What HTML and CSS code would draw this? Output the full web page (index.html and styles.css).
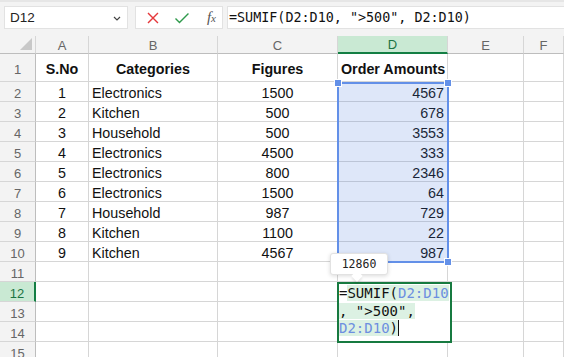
FILE: index.html
```html
<!DOCTYPE html>
<html lang="en">
<head>
    <meta charset="UTF-8">
    <title>SUMIF - Sheet</title>
    <link rel="stylesheet" href="styles.css">
</head>
<body>
    <div class="toolbar">
        <div class="name-box">
            <span>D12</span>
            <svg class="chevron" width="8" height="5" viewBox="0 0 8 5"><path d="M1 1 L4 4 L7 1" fill="none" stroke="#444" stroke-width="1.2"/></svg>
        </div>
        <div class="fx-box">
            <svg width="14" height="14" viewBox="0 0 14 14"><path d="M2 2 L12 12 M12 2 L2 12" stroke="#e5383b" stroke-width="1.4" fill="none"/></svg>
            <svg width="16" height="14" viewBox="0 0 16 14"><path d="M1.5 7.5 L5.5 11.5 L14.5 2.5" stroke="#2f9a4c" stroke-width="1.4" fill="none"/></svg>
            <span class="fx">f<span class="fx-x">x</span></span>
        </div>
        <div class="formula-bar">=SUMIF(D2:D10, "&gt;500", D2:D10)</div>
    </div>

    <div class="sheet">
        <div class="grid">
            <div class="corner"><svg width="12" height="12" viewBox="0 0 12 12"><path d="M12 0 L12 12 L0 12 Z" fill="#c8c8c8"/></svg></div>
            <div class="col-head">A</div>
            <div class="col-head">B</div>
            <div class="col-head">C</div>
            <div class="col-head active">D</div>
            <div class="col-head">E</div>
            <div class="col-head">F</div>

            <div class="row-head tall">1</div>
            <div class="cell tall bold center">S.No</div>
            <div class="cell tall bold center">Categories</div>
            <div class="cell tall bold center">Figures</div>
            <div class="cell tall bold">Order Amounts</div>
            <div class="cell tall"></div>
            <div class="cell tall"></div>

            <div class="row-head">2</div>
            <div class="cell center">1</div><div class="cell">Electronics</div><div class="cell center">1500</div><div class="cell right">4567</div><div class="cell"></div><div class="cell"></div>
            <div class="row-head">3</div>
            <div class="cell center">2</div><div class="cell">Kitchen</div><div class="cell center">500</div><div class="cell right">678</div><div class="cell"></div><div class="cell"></div>
            <div class="row-head">4</div>
            <div class="cell center">3</div><div class="cell">Household</div><div class="cell center">500</div><div class="cell right">3553</div><div class="cell"></div><div class="cell"></div>
            <div class="row-head">5</div>
            <div class="cell center">4</div><div class="cell">Electronics</div><div class="cell center">4500</div><div class="cell right">333</div><div class="cell"></div><div class="cell"></div>
            <div class="row-head">6</div>
            <div class="cell center">5</div><div class="cell">Electronics</div><div class="cell center">800</div><div class="cell right">2346</div><div class="cell"></div><div class="cell"></div>
            <div class="row-head">7</div>
            <div class="cell center">6</div><div class="cell">Electronics</div><div class="cell center">1500</div><div class="cell right">64</div><div class="cell"></div><div class="cell"></div>
            <div class="row-head">8</div>
            <div class="cell center">7</div><div class="cell">Household</div><div class="cell center">987</div><div class="cell right">729</div><div class="cell"></div><div class="cell"></div>
            <div class="row-head">9</div>
            <div class="cell center">8</div><div class="cell">Kitchen</div><div class="cell center">1100</div><div class="cell right">22</div><div class="cell"></div><div class="cell"></div>
            <div class="row-head">10</div>
            <div class="cell center">9</div><div class="cell">Kitchen</div><div class="cell center">4567</div><div class="cell right">987</div><div class="cell"></div><div class="cell"></div>
            <div class="row-head">11</div>
            <div class="cell"></div><div class="cell"></div><div class="cell"></div><div class="cell"></div><div class="cell"></div><div class="cell"></div>
            <div class="row-head active">12</div>
            <div class="cell"></div><div class="cell"></div><div class="cell"></div><div class="cell"></div><div class="cell"></div><div class="cell"></div>
            <div class="row-head">13</div>
            <div class="cell"></div><div class="cell"></div><div class="cell"></div><div class="cell"></div><div class="cell"></div><div class="cell"></div>
            <div class="row-head">14</div>
            <div class="cell"></div><div class="cell"></div><div class="cell"></div><div class="cell"></div><div class="cell"></div><div class="cell"></div>
            <div class="row-head">15</div>
            <div class="cell"></div><div class="cell"></div><div class="cell"></div><div class="cell"></div><div class="cell"></div><div class="cell"></div>
        </div>

        <!-- selected range D2:D10 -->
        <div class="selection">
            <span class="handle h-tl"></span>
            <span class="handle h-tr"></span>
            <span class="handle h-br"></span>
        </div>

        <!-- in-cell editor for D12 -->
        <div class="editor">=<span class="hl">SUMIF(<span class="ref">D2:D10</span></span><br><span class="hl">, "&gt;500",</span><br><span class="hl"><span class="ref">D2:D10</span>)</span><span class="caret"></span></div>

        <div class="tip">12860</div>
    </div>
</body>
</html>
```

FILE: styles.css
```css
body {
    margin: 0;
    font-family: 'Liberation Sans', Arial, sans-serif;
    background-color: #fff;
    overflow: hidden;
    width: 564px;
    height: 357px;
}

.toolbar {
    display: flex;
    gap: 7px;
    height: 36px;
    padding: 4px 0 0 4px;
    box-sizing: border-box;
    background-color: #f3f3f3;
    border-top: 2px solid #e6e6e6;
}

.name-box,
.fx-box,
.formula-bar {
    height: 23px;
    background-color: #fff;
    border: 1px solid #e2e2e2;
    box-sizing: border-box;
    display: flex;
    align-items: center;
}

.name-box {
    width: 124px;
    padding: 0 6px 0 5px;
    justify-content: space-between;
    font-size: 13.5px;
    color: #222;
}

.chevron {
    margin-top: 2px;
}

.fx-box {
    width: 88px;
    padding: 0 6px 0 10px;
    gap: 14px;
}

.fx {
    font-family: 'Liberation Serif', 'DejaVu Serif', serif;
    font-style: italic;
    font-size: 15px;
    color: #555;
    margin-left: 3px;
}

.fx-x {
    font-size: 11px;
}

.formula-bar {
    flex: 1;
    margin-left: -3px;
    border-right: none;
    padding-left: 1px;
    font-family: 'DejaVu Sans Mono', 'Liberation Mono', monospace;
    font-size: 13.4px;
    color: #111;
}

.sheet {
    position: relative;
}

.grid {
    display: grid;
    grid-template-columns: 36px 53px 129px 120px 110px 76px 40px;
    grid-template-rows: 18px 28px;
    grid-auto-rows: 20px;
    background-color: #f3f3f3;
}

.corner,
.col-head,
.row-head,
.cell {
    box-sizing: border-box;
    border-right: 1px solid #d6d6d6;
    border-bottom: 1px solid #d6d6d6;
    display: flex;
    align-items: center;
    overflow: hidden;
    white-space: nowrap;
}

.corner {
    justify-content: flex-end;
    align-items: flex-end;
    padding: 0 3px 3px 0;
    border-bottom-color: #bdbdbd;
}

.col-head {
    justify-content: center;
    padding-top: 1px;
    font-size: 13px;
    color: #666;
    border-bottom-color: #bdbdbd;
}

.col-head.active {
    background-color: #c9e9d3;
    color: #1c7443;
    border-bottom: 2px solid #137e43;
}

.row-head {
    justify-content: center;
    padding-top: 3px;
    font-size: 13px;
    color: #666;
    border-right-color: #bdbdbd;
}

.row-head.active {
    background-color: #c9e9d3;
    color: #1c7443;
    border-right: 2px solid #137e43;
}

.cell {
    background-color: #fff;
    font-size: 14.3px;
    color: #111;
    padding: 3px 3px 0;
}

.cell.bold {
    font-weight: bold;
}

.cell.center {
    justify-content: center;
}

.cell.right {
    justify-content: flex-end;
}

.selection {
    position: absolute;
    left: 337px;
    top: 46px;
    width: 112px;
    height: 181px;
    box-sizing: border-box;
    border: 2px solid #6390e8;
    background-color: rgba(70, 120, 220, 0.18);
}

.handle {
    position: absolute;
    width: 6px;
    height: 6px;
    background-color: #6390e8;
    border: 1px solid #fff;
}

.h-tl { left: -5px; top: -5px; }
.h-tr { right: -5px; top: -5px; }
.h-br { right: -5px; bottom: -5px; }

.editor {
    position: absolute;
    left: 337px;
    top: 246px;
    width: 115px;
    height: 61px;
    box-sizing: border-box;
    border: 2px solid #177a40;
    background-color: #fff;
    padding: 1px 0 0 0;
    font-family: 'DejaVu Sans Mono', 'Liberation Mono', monospace;
    font-size: 14px;
    line-height: 17.5px;
    color: #111;
    white-space: nowrap;
}

.hl {
    background-color: #dcf1e3;
}

.ref {
    color: #6d8fe0;
}

.caret {
    display: inline-block;
    width: 1px;
    height: 16px;
    background-color: #111;
    vertical-align: -3px;
}

.tip {
    position: absolute;
    left: 330px;
    top: 217px;
    width: 58px;
    height: 22px;
    box-sizing: border-box;
    background-color: #fff;
    border: 1px solid #e2e2e2;
    border-radius: 3px;
    box-shadow: 0 1px 4px rgba(0,0,0,0.15);
    font-family: 'DejaVu Sans Mono', 'Liberation Mono', monospace;
    font-size: 11.5px;
    color: #222;
    display: flex;
    align-items: center;
    justify-content: center;
}

.tip::after {
    content: "";
    position: absolute;
    left: 22px;
    bottom: -6px;
    width: 8px;
    height: 8px;
    background-color: #fff;
    transform: rotate(45deg);
    box-shadow: 2px 2px 2px rgba(0,0,0,0.08);
}
```
